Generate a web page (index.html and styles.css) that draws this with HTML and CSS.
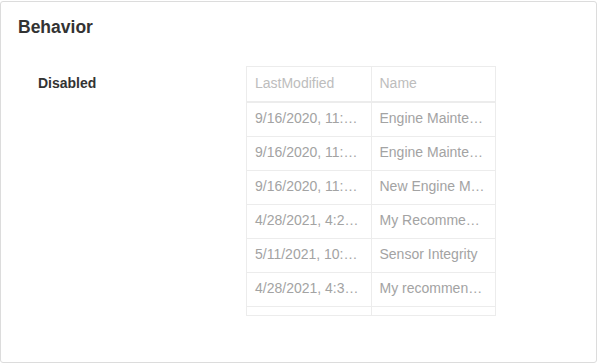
FILE: index.html
```html
<!DOCTYPE html>
<html lang="en">
<head>
    <meta charset="UTF-8">
    <title>Behavior</title>
    <link rel="stylesheet" href="styles.css">
</head>
<body>

<div class="panel">
    <h2 class="panel-title">Behavior</h2>
    <div class="field">
        <label class="field-label">Disabled</label>
        <div class="grid-wrapper">
            <table class="grid">
                <thead>
                    <tr><th>LastModified</th><th>Name</th></tr>
                </thead>
                <tbody>
                    <tr><td>9/16/2020, 11:06 AM</td><td>Engine Maintenance</td></tr>
                    <tr><td>9/16/2020, 11:08 AM</td><td>Engine Maintenance 2</td></tr>
                    <tr><td>9/16/2020, 11:12 AM</td><td>New Engine Model</td></tr>
                    <tr><td>4/28/2021, 4:22 PM</td><td>My Recommendation</td></tr>
                    <tr><td>5/11/2021, 10:41 AM</td><td>Sensor Integrity</td></tr>
                    <tr><td>4/28/2021, 4:35 PM</td><td>My recommendation 2</td></tr>
                    <tr><td>5/12/2021, 9:15 AM</td><td>Oil Pressure</td></tr>
                </tbody>
            </table>
        </div>
    </div>
</div>

</body>
</html>
```

FILE: styles.css
```css
body {
    margin: 0;
    font-family: "Liberation Sans", Arial, sans-serif;
    background-color: #fff;
}
div.panel {
    box-sizing: border-box;
    width: 597px;
    height: 362px;
    margin-top: 1px;
    border: 1px solid #dcdcdc;
    border-radius: 3px;
    padding: 15px 17px;
}
.panel-title {
    margin: 0 0 29px 0;
    font-size: 17.5px;
    font-weight: bold;
    color: #333;
    line-height: 20px;
}
div.field {
    display: flex;
    flex-direction: row;
    padding-left: 20px;
}
.field-label {
    display: block;
    width: 208px;
    padding-top: 9px;
    font-size: 14px;
    font-weight: bold;
    color: #333;
}
div.grid-wrapper {
    box-sizing: border-box;
    width: 250px;
    height: 250px;
    overflow: hidden;
    border: 1px solid #ececec;
}
table.grid {
    border-collapse: collapse;
    table-layout: fixed;
    width: 248px;
    font-size: 14px;
}
table.grid th, table.grid td {
    height: 34px;
    padding: 0 8px 2px 8px;
    text-align: left;
    font-weight: normal;
    white-space: nowrap;
    overflow: hidden;
    text-overflow: ellipsis;
    border-bottom: 1px solid #ececec;
    box-sizing: border-box;
}
table.grid th {
    height: 35px;
    color: #bdbdbd;
    border-bottom: 2px solid #ececec;
}
table.grid td {
    color: #a3a3a3;
}
table.grid th:first-child, table.grid td:first-child {
    width: 124px;
    border-right: 1px solid #ececec;
}
```
